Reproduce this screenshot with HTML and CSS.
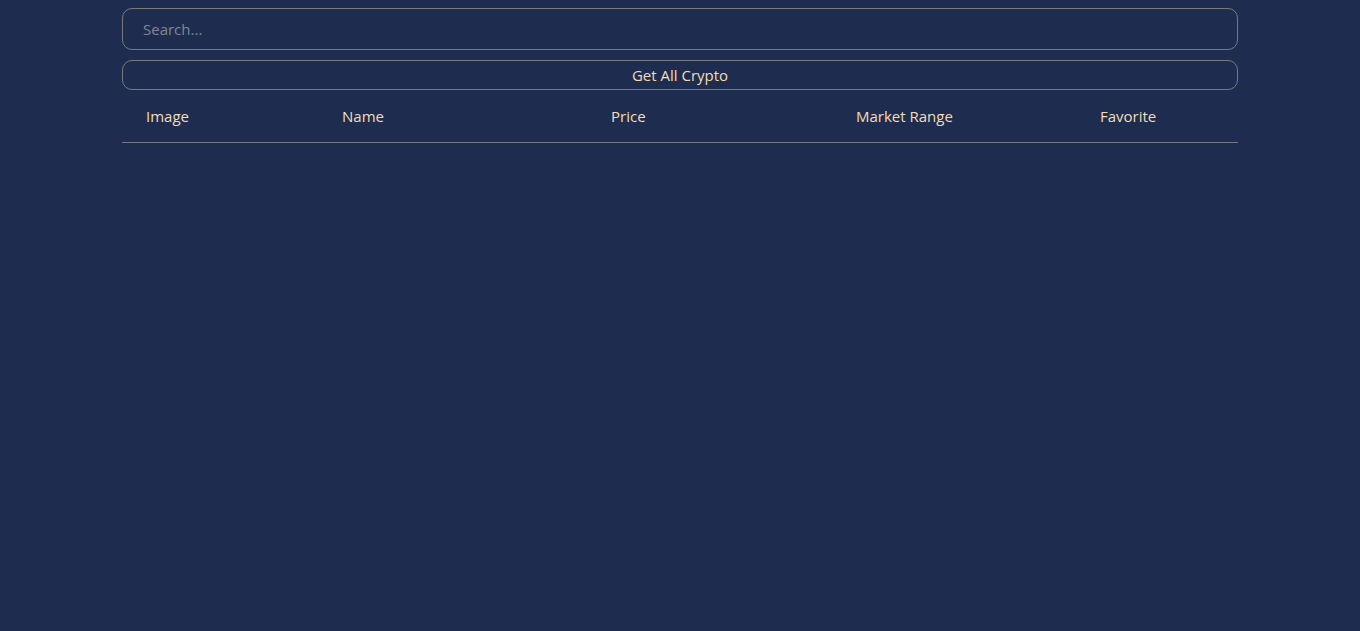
FILE: index.html
```html
<!DOCTYPE html>
<html>
<head>
<meta charset="utf-8">
<link rel="stylesheet" href="styles.css">
</head>
<body>
<div class="container">
  <input class="search" type="text" placeholder="Search...">
  <button class="get-all">Get All Crypto</button>
  <table class="crypto-table">
    <thead>
      <tr>
        <th class="c1">Image</th>
        <th class="c2">Name</th>
        <th class="c3">Price</th>
        <th class="c4">Market Range</th>
        <th class="c5">Favorite</th>
      </tr>
    </thead>
    <tbody></tbody>
  </table>
</div>
</body>
</html>
```
FILE: styles.css
```css
html, body {
  margin: 0;
  padding: 0;
  background: #1e2d4f;
  height: 100%;
}
body {
  font-family: "Open Sans", "Noto Sans", sans-serif;
  color: #f3dcb6;
}
.container {
  width: 1116px;
  margin: 0 auto;
  padding-top: 8px;
  display: flex;
  flex-direction: column;
}
.search {
  box-sizing: border-box;
  height: 42px;
  width: 100%;
  background: transparent;
  border: 1px solid #77787f;
  border-radius: 10px;
  padding: 0 20px;
  font-family: inherit;
  font-size: 15px;
  color: #f3dcb6;
  outline: none;
}
.search::placeholder {
  color: #7f8595;
}
.get-all {
  box-sizing: border-box;
  margin-top: 10px;
  height: 30px;
  width: 100%;
  background: transparent;
  border: 1px solid #77787f;
  border-radius: 10px;
  font-family: inherit;
  font-size: 15px;
  color: #f3dcb6;
  padding: 0;
}
.crypto-table {
  width: 100%;
  border-collapse: collapse;
  table-layout: fixed;
}
.crypto-table th {
  text-align: left;
  font-weight: normal;
  font-size: 15px;
  line-height: 20px;
  padding: 16px 0 16px 24px;
  border-bottom: 1px solid #77787f;
}
.c1 { width: 172px; }
.c2 { width: 245px; }
.c3 { width: 221px; }
.c4 { width: 220px; }
```
